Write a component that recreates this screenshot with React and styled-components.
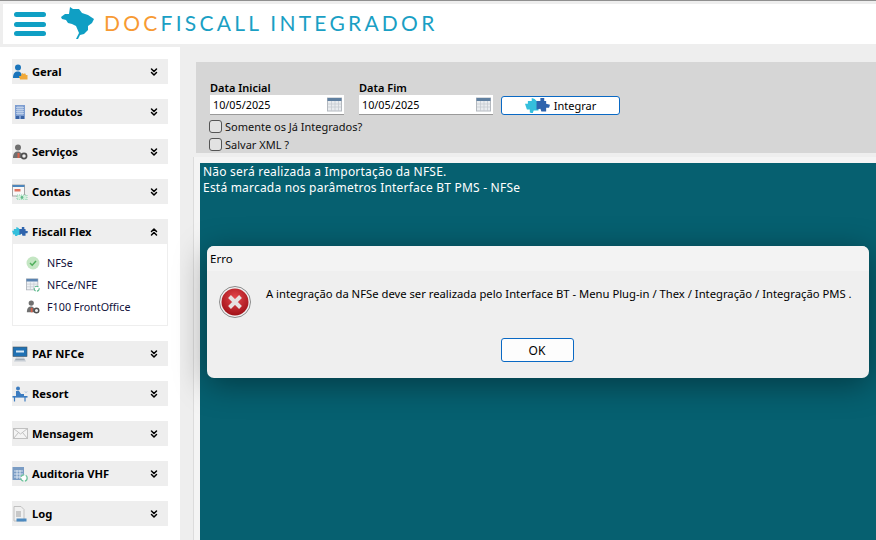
import React from "react";
import styled, { createGlobalStyle } from "styled-components";
import { ChevronsDown, ChevronsUp } from "lucide-react";

const GlobalStyle = createGlobalStyle`
  html, body { margin: 0; padding: 0; height: 100%; overflow: hidden; }
  body { background: #eeeeee; font-family: "Noto Sans", "Open Sans", sans-serif; color: #000; }
  * { box-sizing: border-box; }
`;

/* ---------- icons ---------- */
const BrazilMap = () => (
  <svg width="34" height="33" viewBox="0 0 34 33">
    <path
      fill="#0f9fc4"
      d="M0 10 L4 7 L8 7 L9 0 L12 2 L18 2 L21 6 L27 8 L33 12 L31 16 L27 19 L27 23 L23 27 L19 28 L17 32 L15 32 L17 28 L18 26 L15 19 L11 17 L7 16 L5 13 L1 12 Z"
    />
  </svg>
);

const PersonIcon = ({ body = "#1b75bb", extra }) => (
  <svg width="16" height="16" viewBox="0 0 16 16">
    <circle cx="6" cy="3.5" r="3" fill={body} />
    <path d="M1 14 C1 9 3 7.5 6 7.5 C9 7.5 10 10 10 14 Z" fill={body} />
    {extra}
  </svg>
);

const GeralIcon = () => (
  <PersonIcon
    extra={
      <path
        d="M7 12 L9 12 L10 9 L12 10 L13 9 L14 11 L15.5 11 L15.5 15.5 L8 15.5 Z"
        fill="#f0a93a"
      />
    }
  />
);

const ServiceIcon = () => (
  <PersonIcon
    body="#707070"
    extra={
      <>
        <rect x="5.5" y="9" width="2" height="5" fill="#d9604a" />
        <circle cx="12" cy="12" r="2.6" fill="#eee" stroke="#505050" strokeWidth="1.7" />
      </>
    }
  />
);

const BuildingIcon = () => (
  <svg width="16" height="16" viewBox="0 0 16 16">
    <rect x="3" y="1" width="10" height="14" fill="#7d9dd0" />
    <path d="M4 3.5h8M4 5.5h8M4 7.5h8M4 9.5h8M6 2v9M8 2v9M10 2v9" stroke="#cfdcef" strokeWidth="0.7" />
    <rect x="4" y="12" width="3" height="3" fill="#3a63a3" />
    <rect x="9" y="12" width="3" height="3" fill="#3a63a3" />
  </svg>
);

const BillIcon = () => (
  <svg width="16" height="16" viewBox="0 0 16 16">
    <rect x="0.5" y="1" width="12" height="11" fill="#f7f7f7" stroke="#a5a5a5" />
    <rect x="0.5" y="1" width="12" height="2" fill="#4d86bd" />
    <rect x="2.5" y="5" width="6" height="2.5" fill="#e0735e" />
    <rect x="5" y="11" width="10" height="5" fill="#d3efdd" stroke="#68c295" strokeWidth="0.7" strokeDasharray="1 1" />
    <circle cx="10" cy="13.5" r="1.4" fill="#62b98a" />
  </svg>
);

const PuzzleIcon = ({ w = 16 }) => (
  <svg width={w} height={w * 0.62} viewBox="0 0 26 16">
    <path fill="#35bfdc" d="M0 6 L3 6 L3 3 L7 3 L7 0 L10 1 L12 3 L14 3 L14 13 L9 13 L8 16 L5 15 L5 12 L2 12 L1 9 Z" />
    <path fill="#2f64ad" d="M12 3 L16 3 L16 0 L20 0 L20 3 L22 3 L22 6 L26 7 L25 10 L22 10 L22 14 L17 14 L16 11 L12 12 Z" />
  </svg>
);

const CheckIcon = () => (
  <svg width="14" height="14" viewBox="0 0 14 14">
    <circle cx="7" cy="7" r="6.5" fill="#c4e6c3" />
    <path d="M4 7 L6.2 9.2 L10 5" fill="none" stroke="#4fae5b" strokeWidth="1.5" />
  </svg>
);

const CalendarRefreshIcon = () => (
  <svg width="16" height="16" viewBox="0 0 16 16">
    <rect x="0.5" y="1" width="13" height="12.5" fill="#eef1f5" stroke="#b0b5bc" />
    <rect x="0.5" y="1" width="13" height="3" fill="#5a83b0" />
    <path d="M1 7h12M1 10h12M5 5v8M9 5v8" stroke="#c3c8cf" strokeWidth="0.8" />
    <circle cx="12.2" cy="12.2" r="2.8" fill="#fff" stroke="#5cb98c" strokeWidth="1.2" strokeDasharray="4 1.5" />
  </svg>
);

const MonitorIcon = () => (
  <svg width="16" height="16" viewBox="0 0 16 16">
    <rect x="1" y="1" width="14" height="9.5" fill="#2071b3" stroke="#49565f" strokeWidth="0.6" />
    <rect x="4" y="4.5" width="8" height="2" fill="#d9e9f6" />
    <path d="M2 15.5 L14 15.5 L12 11.5 L4 11.5 Z" fill="#c5ccd3" />
    <path d="M3.5 13.5h9" stroke="#8d98a3" strokeWidth="0.6" />
  </svg>
);

const TableIcon = () => (
  <svg width="16" height="16" viewBox="0 0 16 16">
    <circle cx="6" cy="2.5" r="2" fill="#3c7cc0" />
    <path d="M4 5 L7 5 L9 8 L12 8 L12 10 L4 10 Z" fill="#3c7cc0" />
    <rect x="0.5" y="10" width="15" height="1.6" fill="#3c7cc0" />
    <path d="M2.5 11 V15.5 M13 11 V15.5" stroke="#3c7cc0" strokeWidth="1.2" />
    <path d="M13 5.5l1 1M15 5.5l-1 1" stroke="#7ba6d3" strokeWidth="0.8" />
  </svg>
);

const MailIcon = () => (
  <svg width="16" height="11" viewBox="0 0 16 11">
    <rect x="1.5" y="0.5" width="14" height="10" fill="#f4f4f4" stroke="#c0c0c0" />
    <path d="M1.5 0.5 L8.5 6 L15.5 0.5 M1.5 10.5 L6.5 4.5 M15.5 10.5 L10.5 4.5" fill="none" stroke="#c0c0c0" />
  </svg>
);

const CalcIcon = () => (
  <svg width="16" height="16" viewBox="0 0 16 16">
    <rect x="0.5" y="1" width="11.5" height="13" fill="#7a9cc4" />
    <path d="M2 5h9M2 8h9M2 11h9M5 4v9M8 4v9" stroke="#e3ecf5" strokeWidth="0.9" />
    <circle cx="12" cy="12" r="3.2" fill="#fff" stroke="#6cc39a" strokeWidth="1.3" strokeDasharray="4 1.5" />
  </svg>
);

const LogIcon = () => (
  <svg width="16" height="16" viewBox="0 0 16 16">
    <path d="M2 0.5 L9 0.5 L12 3.5 L12 15 L2 15 Z" fill="#f0f0f0" stroke="#c0c0c0" />
    <rect x="4" y="5" width="5" height="6" fill="#c8c8c8" />
    <rect x="4.5" y="12.5" width="10" height="3" fill="#4c8ac0" />
  </svg>
);

const DateIcon = () => (
  <svg width="15" height="15" viewBox="0 0 15 15">
    <rect x="0.5" y="1" width="14" height="13" fill="#e9ecef" stroke="#b4b9bf" />
    <rect x="0.5" y="1" width="14" height="3" fill="#5f7f9f" />
    <path d="M1 7h13M1 10h13M4.5 4v10M8 4v10M11.5 4v10" stroke="#c3c8cf" strokeWidth="0.7" />
  </svg>
);

const ErrorIcon = () => (
  <svg width="32" height="32" viewBox="0 0 32 32">
    <defs>
      <radialGradient id="errFill" cx="50%" cy="35%" r="70%">
        <stop offset="0%" stopColor="#e4474c" />
        <stop offset="100%" stopColor="#9c0d14" />
      </radialGradient>
    </defs>
    <circle cx="16" cy="16" r="15.5" fill="#f1f1f1" stroke="#8a8a8a" />
    <circle cx="16" cy="16" r="13.5" fill="url(#errFill)" />
    <path d="M10.5 10.5 L21.5 21.5 M21.5 10.5 L10.5 21.5" stroke="#e6e1e1" strokeWidth="4" />
  </svg>
);

/* ---------- data ---------- */
const menu = [
  { label: "Geral", icon: <GeralIcon /> },
  { label: "Produtos", icon: <BuildingIcon /> },
  { label: "Serviços", icon: <ServiceIcon /> },
  { label: "Contas", icon: <BillIcon /> },
  {
    label: "Fiscall Flex",
    icon: <PuzzleIcon />,
    open: true,
    items: [
      { label: "NFSe", icon: <CheckIcon /> },
      { label: "NFCe/NFE", icon: <CalendarRefreshIcon /> },
      { label: "F100 FrontOffice", icon: <ServiceIcon /> },
    ],
  },
  { label: "PAF NFCe", icon: <MonitorIcon /> },
  { label: "Resort", icon: <TableIcon /> },
  { label: "Mensagem", icon: <MailIcon /> },
  { label: "Auditoria VHF", icon: <CalcIcon /> },
  { label: "Log", icon: <LogIcon /> },
];

export default function App() {
  return (
    <>
      <GlobalStyle />
      <Page>
        <TopLine />
        <Header>
          <Hamburger>
            <i />
            <i />
            <i />
          </Hamburger>
          <MapSlot>
            <BrazilMap />
          </MapSlot>
          <Brand>
            <span>DOC</span>FISCALL INTEGRADOR
          </Brand>
        </Header>
        <Body>
          <Sidebar>
            {menu.map((m) => (
              <Group key={m.label}>
                <GroupHead>
                  <GroupIcon>{m.icon}</GroupIcon>
                  <GroupLabel>{m.label}</GroupLabel>
                  {m.open ? (
                    <ChevronsUp size={12} strokeWidth={3} />
                  ) : (
                    <ChevronsDown size={12} strokeWidth={3} />
                  )}
                </GroupHead>
                {m.items && (
                  <SubList>
                    {m.items.map((i) => (
                      <SubItem key={i.label}>
                        <SubIcon>{i.icon}</SubIcon>
                        {i.label}
                      </SubItem>
                    ))}
                  </SubList>
                )}
              </Group>
            ))}
          </Sidebar>
          <Content>
            <Filters>
              <FieldRow>
                <Field>
                  <FieldLabel>Data Inicial</FieldLabel>
                  <DateBox>
                    10/05/2025
                    <DateIcon />
                  </DateBox>
                </Field>
                <Field>
                  <FieldLabel>Data Fim</FieldLabel>
                  <DateBox>
                    10/05/2025
                    <DateIcon />
                  </DateBox>
                </Field>
                <IntegrarButton>
                  <PuzzleIcon w={25} />
                  Integrar
                </IntegrarButton>
              </FieldRow>
              <CheckRow>
                <CheckBox />
                Somente os Já Integrados?
              </CheckRow>
              <CheckRow>
                <CheckBox />
                Salvar XML ?
              </CheckRow>
            </Filters>
            <LogFrame>
              <LogPanel>
                <div>Não será realizada a Importação da NFSE.</div>
                <div>Está marcada nos parâmetros Interface BT PMS - NFSe</div>
              </LogPanel>
            </LogFrame>
          </Content>
        </Body>
        <Dialog>
          <DialogTitle>Erro</DialogTitle>
          <DialogBody>
            <DialogMessage>
              <ErrorIcon />
              <span>
                A integração da NFSe deve ser realizada pelo Interface BT - Menu Plug-in / Thex / Integração / Integração PMS .
              </span>
            </DialogMessage>
            <OkButton>OK</OkButton>
          </DialogBody>
        </Dialog>
      </Page>
    </>
  );
}

/* ---------- layout ---------- */
const Page = styled.div`
  position: relative;
  width: 876px;
  height: 540px;
  overflow: hidden;
  background: #eeeeee;
  display: flex;
  flex-direction: column;
`;

const TopLine = styled.div`
  height: 1px;
  background: #8f8f8f;
  margin-bottom: 3px;
  flex: none;
`;

const Header = styled.header`
  flex: none;
  height: 40px;
  margin-left: 3px;
  background: #fff;
  display: flex;
  align-items: center;
  padding-left: 11px;
`;

const Hamburger = styled.div`
  width: 32px;
  height: 24px;
  margin-right: 15px;
  display: flex;
  flex-direction: column;
  justify-content: space-between;

  i {
    display: block;
    height: 5px;
    border-radius: 3px;
    background: #0f9fc4;
  }
`;

const MapSlot = styled.div`
  display: flex;
  margin-bottom: 2px;
`;

const Brand = styled.div`
  margin: 0 0 3px 9px;
  font-family: "Lato", sans-serif;
  font-size: 21px;
  letter-spacing: 3.25px;
  color: #1a9fc4;
  white-space: nowrap;

  span {
    color: #f79a33;
  }
`;

const Body = styled.div`
  flex: 1;
  min-height: 0;
  margin-top: 3px;
  display: flex;
`;

const Sidebar = styled.aside`
  flex: none;
  width: 180px;
  background: #fff;
  padding: 12px 12px 0;
  display: flex;
  flex-direction: column;
  gap: 15px;
`;

const Group = styled.section`
  display: flex;
  flex-direction: column;
`;

const GroupHead = styled.div`
  height: 25px;
  background: #eeeeee;
  display: flex;
  align-items: center;
  padding-right: 8px;
`;

const GroupIcon = styled.span`
  width: 20px;
  height: 16px;
  display: flex;
  align-items: center;
  justify-content: flex-start;
  flex: none;
`;

const GroupLabel = styled.span`
  flex: 1;
  font-family: "Noto Sans", sans-serif;
  font-size: 11.2px;
  font-weight: 700;
  color: #000;
`;

const SubList = styled.div`
  height: 82px;
  border: 1px solid #eeeeee;
  border-top: none;
  padding: 11px 0 0 13px;
  display: flex;
  flex-direction: column;
  gap: 6px;
`;

const SubItem = styled.div`
  height: 16px;
  display: flex;
  align-items: center;
  gap: 7px;
  font-size: 10.75px;
  color: #10103a;
`;

const SubIcon = styled.span`
  width: 14px;
  display: flex;
  justify-content: center;
`;

const Content = styled.main`
  flex: 1;
  min-width: 0;
  display: flex;
  flex-direction: column;
  padding: 15px 0 0 13px;
`;

const Filters = styled.div`
  flex: none;
  height: 91px;
  margin-left: 3px;
  background: #d6d6d6;
  padding: 18px 0 0 14px;
  display: flex;
  flex-direction: column;
`;

const FieldRow = styled.div`
  display: flex;
  align-items: flex-end;
  gap: 15px;
  margin-bottom: 3px;
`;

const Field = styled.div`
  display: flex;
  flex-direction: column;
`;

const FieldLabel = styled.label`
  font-size: 11px;
  line-height: 15px;
  font-weight: 600;
`;

const DateBox = styled.div`
  width: 134px;
  height: 20px;
  background: #fff;
  border-bottom: 1px solid #9a9a9a;
  display: flex;
  align-items: center;
  justify-content: space-between;
  padding: 0 2px 0 3px;
  font-size: 10.8px;
`;

const IntegrarButton = styled.button`
  width: 119px;
  height: 19px;
  margin: 0 0 0 -7px;
  background: #fff;
  border: 1px solid #0a69c4;
  border-radius: 3px;
  display: flex;
  align-items: center;
  justify-content: center;
  gap: 4px;
  padding: 0;
  font-family: inherit;
  font-size: 11px;
  color: #000;
`;

const CheckRow = styled.div`
  height: 19px;
  display: flex;
  align-items: center;
  gap: 3px;
  margin-left: -1px;
  font-size: 11px;
  color: #111;
`;

const CheckBox = styled.span`
  width: 13px;
  height: 13px;
  border: 1px solid #555;
  border-radius: 3px;
  background: #e2e2e2;
`;

const LogFrame = styled.div`
  flex: 1;
  min-height: 0;
  margin-top: 4px;
  background: #f4f4f4;
  border-left: 1px solid #dcdcdc;
  padding: 6px 0 0 6px;
`;

const LogPanel = styled.div`
  height: 100%;
  background: #066070;
  color: #fff;
  padding: 1px 3px;
  font-size: 12px;
  letter-spacing: 0.21px;
  line-height: 15.5px;
`;

const Dialog = styled.div`
  position: absolute;
  left: 207px;
  top: 246px;
  width: 662px;
  height: 132px;
  border-radius: 7px;
  background: #efefef;
  box-shadow: 0 6px 32px rgba(0, 0, 0, 0.4);
  display: flex;
  flex-direction: column;
`;

const DialogTitle = styled.div`
  height: 25px;
  flex: none;
  background: #f3f3f3;
  border-radius: 7px 7px 0 0;
  padding: 0 3px;
  display: flex;
  align-items: center;
  font-size: 11.5px;
`;

const DialogBody = styled.div`
  flex: 1;
  display: flex;
  flex-direction: column;
  align-items: center;
  padding-top: 15px;
`;

const DialogMessage = styled.div`
  align-self: stretch;
  display: flex;
  align-items: flex-start;
  gap: 15px;
  padding-left: 12px;
  font-size: 11.25px;
  line-height: 17px;
  white-space: nowrap;

  span {
    margin-top: -1px;
  }
`;

const OkButton = styled.button`
  width: 73px;
  height: 24px;
  margin: 20px 2px 0 0;
  background: #fdfdfd;
  border: 1px solid #0a69c4;
  border-radius: 3px;
  font-family: inherit;
  font-size: 12px;
  color: #000;
  padding: 0;
`;
